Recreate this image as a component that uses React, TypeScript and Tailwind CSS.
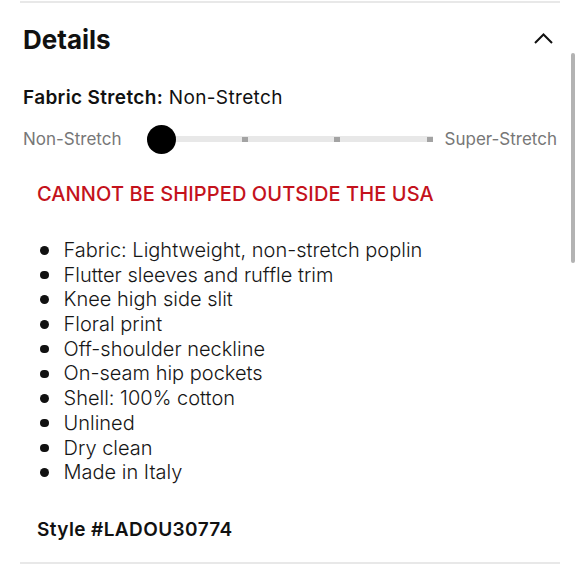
const features = [
  "Fabric: Lightweight, non-stretch poplin",
  "Flutter sleeves and ruffle trim",
  "Knee high side slit",
  "Floral print",
  "Off-shoulder neckline",
  "On-seam hip pockets",
  "Shell: 100% cotton",
  "Unlined",
  "Dry clean",
  "Made in Italy",
];

// tick centres measured from the left end of the track
const ticks = [97, 189, 282];

function StretchSlider() {
  return (
    <div className="relative ml-[26px] h-[30px] w-[285px] shrink-0">
      <div className="absolute left-0 right-0 top-[12px] h-[6px] bg-[#e8e8e8]" />
      {ticks.map((t) => (
        <div
          key={t}
          className="absolute top-[12.5px] h-[5px] w-[6px] bg-[#a3a3a3]"
          style={{ left: t - 3 }}
        />
      ))}
      <div className="absolute left-[-1px] top-[0.5px] h-[29px] w-[29px] rounded-full bg-black" />
    </div>
  );
}

export default function App() {
  return (
    <div className="relative h-[580px] w-[580px] overflow-hidden bg-white font-['Inter',sans-serif] text-[#111]">
      <div className="mx-[20px] mt-[1px] border-t-2 border-[#e8e8e8]">
        {/* Header */}
        <div className="mt-[21px] flex items-center justify-between pl-[3px] pr-[7px]">
          <h2 className="text-[26px] font-bold leading-[32px]">Details</h2>
          <svg width="19" height="11" viewBox="0 0 19 11" fill="none" className="mt-[-3px]">
            <polyline points="1,10 9.5,1.5 18,10" stroke="#111" strokeWidth="2" />
          </svg>
        </div>

        {/* Fabric stretch */}
        <p className="mt-[30px] pl-[3px] text-[19px] leading-[24px] tracking-[0.35px]">
          <span className="font-semibold">Fabric Stretch:</span> Non-Stretch
        </p>

        <div className="mt-[14px] flex h-[30px] items-center pl-[3px] pr-[3px] text-[17px] leading-[22px] text-[#777]">
          <span className="shrink-0">Non-Stretch</span>
          <StretchSlider />
          <span className="ml-auto shrink-0">Super-Stretch</span>
        </div>

        {/* Shipping notice */}
        <p className="mt-[28px] pl-[17px] text-[20px] font-medium leading-[24px] tracking-[0.1px] text-[#c4121c]">
          CANNOT BE SHIPPED OUTSIDE THE USA
        </p>

        {/* Feature list */}
        <ul className="mt-[32px] pl-[20px]">
          {features.map((f) => (
            <li key={f} className="flex h-[24.7px] items-center text-[20px] font-light leading-[24.7px] text-[#161616]">
              <span className="h-[8.5px] w-[8.5px] shrink-0 rounded-full bg-[#111]" />
              <span className="ml-[15px]">{f}</span>
            </li>
          ))}
        </ul>

        <p className="mt-[33px] pl-[17px] text-[19px] font-semibold leading-[24px] tracking-[0.4px]">Style #LADOU30774</p>

        <div className="mt-[20px] border-t-2 border-[#e8e8e8]" />
      </div>

      {/* scrollbar */}
      <div className="absolute left-[571px] top-[53px] h-[210px] w-[4px] rounded-full bg-[#b3b3b3]" />
    </div>
  );
}
